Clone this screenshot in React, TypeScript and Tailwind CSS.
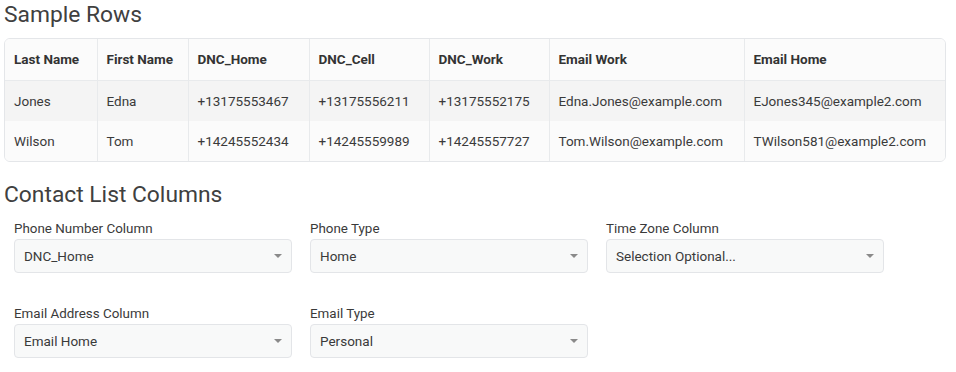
import React from "react";

const cols = [
  { name: "Last Name", w: 92 },
  { name: "First Name", w: 91 },
  { name: "DNC_Home", w: 121 },
  { name: "DNC_Cell", w: 120 },
  { name: "DNC_Work", w: 120 },
  { name: "Email Work", w: 195 },
  { name: "Email Home", w: 202 },
];

const rows = [
  ["Jones", "Edna", "+13175553467", "+13175556211", "+13175552175", "Edna.Jones@example.com", "EJones345@example2.com"],
  ["Wilson", "Tom", "+14245552434", "+14245559989", "+14245557727", "Tom.Wilson@example.com", "TWilson581@example2.com"],
];

function Select({ label, value }: { label: string; value: string }) {
  return (
    <div className="flex flex-col w-[278px]">
      <div className="text-[13.4px] leading-[17px] text-[#3a3a3a] mb-[2px]">{label}</div>
      <div className="h-[34px] rounded-[4px] border border-[#e3e5e8] bg-[#f8f9f9] flex items-center justify-between pl-[9px] pr-[9px]">
        <span className="text-[13.5px] text-[#3a3a3a]">{value}</span>
        <svg width="8" height="4" viewBox="0 0 8 4"><path d="M0 0 L8 0 L4 4 Z" fill="#8a8a8a" /></svg>
      </div>
    </div>
  );
}

export default function App() {
  return (
    <div className="w-[956px] h-[372px] bg-white pl-[4px] pt-[1px]" style={{ fontFamily: "Roboto, 'Liberation Sans', sans-serif" }}>
      <h2 className="text-[22.8px] leading-[28px] text-[#404040] font-normal">Sample Rows</h2>
      <div className="mt-[9px] w-[942px] rounded-[6px] border border-[#e4e6e9] overflow-hidden">
        <table className="border-collapse table-fixed w-full text-[13.5px] text-[#3a3a3a]">
          <colgroup>
            {cols.map((c) => (
              <col key={c.name} style={{ width: c.w }} />
            ))}
          </colgroup>
          <thead>
            <tr className="bg-[#fbfbfb] h-[41px]">
              {cols.map((c, i) => (
                <th key={c.name} className={`text-left font-bold text-[#333] pl-[9px] border-b border-[#e8eaec] ${i > 0 ? "border-l" : ""}`}>
                  {c.name}
                </th>
              ))}
            </tr>
          </thead>
          <tbody>
            {rows.map((r, ri) => (
              <tr key={ri} className={`${ri === 0 ? "bg-[#f4f4f4] h-[41px]" : "bg-[#fbfbfb] h-[40px]"}`}>
                {r.map((v, i) => (
                  <td key={i} className={`pl-[9px] whitespace-nowrap ${i > 0 ? "border-l border-[#e8eaec]" : ""}`}>
                    {v}
                  </td>
                ))}
              </tr>
            ))}
          </tbody>
        </table>
      </div>
      <h2 className="mt-[19px] text-[22.8px] leading-[28px] text-[#404040] font-normal">Contact List Columns</h2>
      <div className="pl-[10px] mt-[11px] flex flex-col gap-[32px]">
        <div className="flex gap-[18px]">
          <Select label="Phone Number Column" value="DNC_Home" />
          <Select label="Phone Type" value="Home" />
          <Select label="Time Zone Column" value="Selection Optional..." />
        </div>
        <div className="flex gap-[18px]">
          <Select label="Email Address Column" value="Email Home" />
          <Select label="Email Type" value="Personal" />
        </div>
      </div>
    </div>
  );
}
